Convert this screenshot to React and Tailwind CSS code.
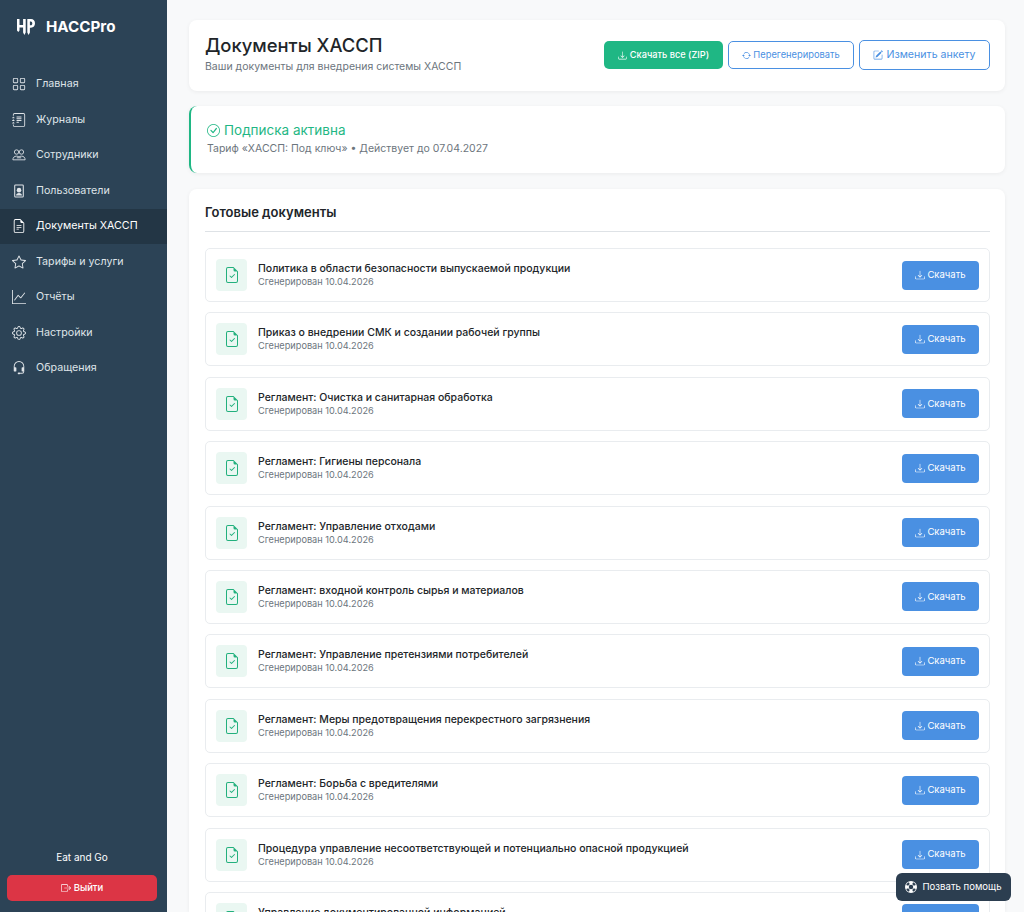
import React from "react";
import {
  BsGrid,
  BsJournalText,
  BsFileEarmarkText,
  BsStar,
  BsGraphUp,
  BsGear,
  BsHeadset,
  BsDownload,
  BsArrowRepeat,
  BsPencilSquare,
  BsCheckCircle,
  BsFileEarmarkCheck,
  BsBoxArrowRight,
  BsLifePreserver,
} from "react-icons/bs";

function StaffIcon({ className }) {
  return (
    <svg className={className} viewBox="0 0 16 16" fill="none" stroke="currentColor" strokeWidth="1">
      <circle cx="5.2" cy="4.6" r="2.5" />
      <circle cx="10.8" cy="4.6" r="2.5" />
      <path d="M1 13.5c0-2.6 1.6-4.2 4.2-4.2 1.2 0 2.2.4 2.8 1 .6-.6 1.6-1 2.8-1 2.6 0 4.2 1.6 4.2 4.2z" />
      <path d="M5.5 11.2h5" />
    </svg>
  );
}

function UserIcon({ className }) {
  return (
    <svg className={className} viewBox="0 0 16 16" fill="currentColor">
      <path
        fillRule="evenodd"
        d="M4 0.5h8a1.5 1.5 0 0 1 1.5 1.5v12a1.5 1.5 0 0 1-1.5 1.5H4A1.5 1.5 0 0 1 2.5 14V2A1.5 1.5 0 0 1 4 0.5zm0 1.2a.4.4 0 0 0-.3.3v12a.4.4 0 0 0 .3.3h8a.4.4 0 0 0 .3-.3V2a.4.4 0 0 0-.3-.3z"
      />
      <circle cx="8" cy="7" r="2.6" />
      <path d="M4.6 13c0-1.8 1.5-2.8 3.4-2.8s3.4 1 3.4 2.8z" />
    </svg>
  );
}

const menu = [
  { label: "Главная", icon: BsGrid },
  { label: "Журналы", icon: BsJournalText },
  { label: "Сотрудники", icon: StaffIcon },
  { label: "Пользователи", icon: UserIcon },
  { label: "Документы ХАССП", icon: BsFileEarmarkText, active: true },
  { label: "Тарифы и услуги", icon: BsStar },
  { label: "Отчёты", icon: BsGraphUp },
  { label: "Настройки", icon: BsGear },
  { label: "Обращения", icon: BsHeadset },
];

const docs = [
  "Политика в области безопасности выпускаемой продукции",
  "Приказ о внедрении СМК и создании рабочей группы",
  "Регламент: Очистка и санитарная обработка",
  "Регламент: Гигиены персонала",
  "Регламент: Управление отходами",
  "Регламент: входной контроль сырья и материалов",
  "Регламент: Управление претензиями потребителей",
  "Регламент: Меры предотвращения перекрестного загрязнения",
  "Регламент: Борьба с вредителями",
  "Процедура управление несоответствующей и потенциально опасной продукцией",
  "Управление документированной информацией",
];

function Logo() {
  return (
    <svg width="18" height="16" viewBox="0 0 18 16" fill="white">
      <path d="M0 0h2.5v6h3.6V0h2.6v13.5L7.4 16 6.1 13.5V8.6H2.5v3L1.3 13 0 11.6z" />
      <path d="M10.3 0h3.7c2.5 0 4 1.8 4 4.3s-1.5 4.4-4 4.4h-1.1v4.8L11.6 16l-1.3-2.5zm2.6 2.5v3.8h.9c.9 0 1.5-.8 1.5-1.9s-.6-1.9-1.5-1.9z" />
    </svg>
  );
}

function Sidebar() {
  return (
    <aside className="w-[167px] shrink-0 h-full bg-[#2c4356] flex flex-col">
      <div className="flex items-start gap-[11px] pl-[17px] pt-[19px] h-[66.5px]">
        <Logo />
        <span className="text-white text-[15.2px] leading-[16px] font-bold">HACCPro</span>
      </div>
      <nav className="flex flex-col">
        {menu.map((item) => (
          <div
            key={item.label}
            className={
              item.active
                ? "flex items-center h-[35.5px] pl-[12px] gap-[10px] text-[10.7px] text-white bg-[#233645]"
                : "flex items-center h-[35.5px] pl-[12px] gap-[10px] text-[10.7px] text-[#dfe4e8]"
            }
          >
            <item.icon className="w-[14px] h-[14px] shrink-0" />
            <span>{item.label}</span>
          </div>
        ))}
      </nav>
      <div className="mt-auto pl-[7px] pr-[10px] pb-[11px]">
        <div className="text-center text-white text-[10px] leading-[14px] mb-[11px]">Eat and Go</div>
        <button className="w-full h-[26px] rounded-[5px] bg-[#dc3545] text-white text-[9.5px] font-medium flex items-center justify-center gap-[3px]">
          <BsBoxArrowRight className="w-[10px] h-[10px]" />
          Выйти
        </button>
      </div>
    </aside>
  );
}

function DocRow({ title }) {
  return (
    <div className="flex items-center h-[54px] shrink-0 border border-[#e9ecef] rounded-[5px] pl-[10px] pr-[10px]">
      <div className="w-[31px] h-[32px] rounded-[4px] bg-[#eaf7f2] flex items-center justify-center shrink-0">
        <BsFileEarmarkCheck className="w-[16px] h-[16px] text-[#22b07d]" />
      </div>
      <div className="ml-[11px] flex-1">
        <div className="text-[10.5px] leading-[14px] font-medium text-[#212529]">{title}</div>
        <div className="text-[9.2px] leading-[12px] text-[#6c757d]">Сгенерирован 10.04.2026</div>
      </div>
      <button className="w-[77px] h-[29px] rounded-[4px] bg-[#4a90e2] text-white text-[9.5px] flex items-center justify-center gap-[2px]">
        <BsDownload className="w-[10px] h-[10px]" />
        Скачать
      </button>
    </div>
  );
}

export default function App() {
  return (
    <div className="h-screen flex overflow-hidden bg-[#f8f9fa] font-['Inter',sans-serif] relative">
      <Sidebar />
      <main className="flex-1 min-w-0 pl-[22px] pr-[19px] pt-[20px] flex flex-col">
        <div className="h-[71px] shrink-0 bg-white rounded-[8px] shadow-[0_1px_4px_rgba(0,0,0,0.06)] flex items-center pl-[16px] pr-[15px]">
          <div className="flex-1 pb-[4px]">
            <h1 className="text-[18.4px] leading-[24px] font-medium text-[#212529] mb-[3px]">Документы ХАССП</h1>
            <p className="text-[10.5px] leading-[14px] text-[#6c757d]">Ваши документы для внедрения системы ХАССП</p>
          </div>
          <div className="flex items-center gap-[5px] pb-[1px]">
            <button className="w-[119px] h-[28px] rounded-[5px] bg-[#1fb784] text-white text-[9.2px] font-medium flex items-center justify-center gap-[3px]">
              <BsDownload className="w-[9px] h-[9px]" />
              Скачать все (ZIP)
            </button>
            <button className="w-[126px] h-[28px] rounded-[5px] border border-[#4a90e2] text-[#4a90e2] text-[9.3px] flex items-center justify-center gap-[2px]">
              <BsArrowRepeat className="w-[9px] h-[9px]" />
              Перегенерировать
            </button>
            <button className="w-[131px] h-[30px] rounded-[5px] border border-[#4a90e2] text-[#4a90e2] text-[10.6px] flex items-center justify-center gap-[3px]">
              <BsPencilSquare className="w-[10px] h-[10px]" />
              Изменить анкету
            </button>
          </div>
        </div>

        <div className="mt-[15px] h-[67px] shrink-0 bg-white rounded-[8px] border-l-[2px] border-[#1fb784] shadow-[0_1px_4px_rgba(0,0,0,0.06)] pl-[16px] pt-[14px]">
          <div className="flex items-center gap-[4px] text-[13.5px] leading-[20px] text-[#1fb784]">
            <BsCheckCircle className="w-[13px] h-[13px]" />
            Подписка активна
          </div>
          <p className="text-[10.5px] leading-[16px] mt-[1px] text-[#6c757d]">
            Тариф «ХАССП: Под ключ» • Действует до 07.04.2027
          </p>
        </div>

        <div className="mt-[16px] flex-1 bg-white rounded-t-[8px] shadow-[0_1px_4px_rgba(0,0,0,0.06)] pl-[16px] pr-[15px] pt-[15px] overflow-hidden">
          <h2 className="text-[13px] leading-[16px] font-semibold text-[#212529] pb-[11px] border-b border-[#dee2e6]">
            Готовые документы
          </h2>
          <div className="mt-[16px] flex flex-col gap-[10.4px]">
            {docs.map((d) => (
              <DocRow key={d} title={d} />
            ))}
          </div>
        </div>
      </main>

      <button className="absolute left-[896px] top-[873px] w-[115px] h-[28px] rounded-[6px] bg-[#2c3e50] text-white text-[9.6px] flex items-center justify-center gap-[5px]">
        <BsLifePreserver className="w-[12px] h-[12px]" />
        Позвать помощь
      </button>
    </div>
  );
}
